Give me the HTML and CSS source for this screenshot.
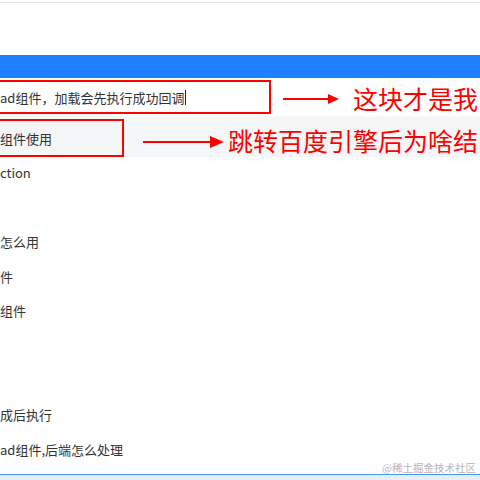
FILE: index.html
```html
<!DOCTYPE html>
<html lang="zh-CN">
<head>
    <meta charset="UTF-8">
    <meta name="viewport" content="width=device-width, initial-scale=1.0">
    <title>搜索建议</title>
    <link rel="stylesheet" href="styles.css">
</head>
<body>
    <div class="page-top"></div>
    <div class="nav-bar"></div>
    <ul class="suggest-list">
        <li class="suggest-item is-input">
            ad组件，加载会先执行成功回调<span class="caret"></span>
            <span class="mark-box box-input"></span>
            <svg class="mark-arrow arrow-input" width="56" height="12" viewBox="0 0 56 12">
                <line x1="0" y1="6" x2="46" y2="6" stroke="#f00" stroke-width="2"/>
                <polygon points="45,1 56,6 45,11" fill="#f00"/>
            </svg>
            <span class="mark-note note-input">这块才是我</span>
        </li>
        <li class="suggest-item is-active">
            组件使用
            <span class="mark-box box-active"></span>
            <svg class="mark-arrow arrow-active" width="81" height="14" viewBox="0 0 81 14">
                <line x1="0" y1="7" x2="68" y2="7" stroke="#f00" stroke-width="2"/>
                <polygon points="67,1 81,7 67,13" fill="#f00"/>
            </svg>
            <span class="mark-note note-active">跳转百度引擎后为啥结</span>
        </li>
        <li class="suggest-item">ction</li>
        <li class="suggest-item"></li>
        <li class="suggest-item">怎么用</li>
        <li class="suggest-item">件</li>
        <li class="suggest-item">组件</li>
        <li class="suggest-item"></li>
        <li class="suggest-item"></li>
        <li class="suggest-item">成后执行</li>
        <li class="suggest-item">ad组件,后端怎么处理</li>
    </ul>
    <div class="page-footer"></div>
    <div class="watermark">@稀土掘金技术社区</div>
</body>
</html>
```

FILE: styles.css
```css
body {
    margin: 0;
    height: 480px;
    overflow: hidden;
    position: relative;
    background-color: #fff;
    font-family: "Noto Sans CJK SC", "Liberation Sans", sans-serif;
}
.page-top {
    margin-top: 2px;
    height: 52px;
    border-top: 1px solid #e0e0e0;
}
.nav-bar {
    height: 23px;
    background-color: #1f80ff;
}
.suggest-list {
    list-style: none;
    margin: 0;
    padding: 0;
}
.suggest-item {
    position: relative;
    display: flex;
    align-items: center;
    height: 34.6px;
    padding-bottom: 4px;
    box-sizing: border-box;
    font-size: 13px;
    color: #333;
    white-space: nowrap;
}
.suggest-item.is-input {
    height: 38px;
    padding-top: 1px;
    padding-bottom: 0;
}
.suggest-item.is-active {
    height: 41px;
    padding-top: 3px;
    padding-bottom: 0;
    background-color: #f5f6f7;
}
.caret {
    display: inline-block;
    width: 1px;
    height: 15px;
    margin-left: 1px;
    background-color: #222;
}
.mark-box {
    position: absolute;
    left: -10px;
    box-sizing: border-box;
    border: 2px solid #f00;
}
.box-input {
    top: 2px;
    width: 281px;
    height: 34px;
}
.box-active {
    top: 3px;
    width: 134px;
    height: 38px;
}
.mark-arrow {
    position: absolute;
}
.arrow-input {
    left: 283px;
    top: 15px;
}
.arrow-active {
    left: 143px;
    top: 19px;
}
.mark-note {
    position: absolute;
    font-size: 25px;
    line-height: 1;
    color: #f00;
}
.note-input {
    left: 353px;
    top: 8px;
}
.note-active {
    left: 228px;
    top: 12px;
}
.page-footer {
    margin-top: 6px;
    height: 10px;
    border-top: 1px solid #4f93ec;
    background-color: #e4eefc;
}
.watermark {
    position: absolute;
    right: 4px;
    bottom: 7px;
    font-size: 10.5px;
    line-height: 1;
    color: #b5b5b5;
}
```
